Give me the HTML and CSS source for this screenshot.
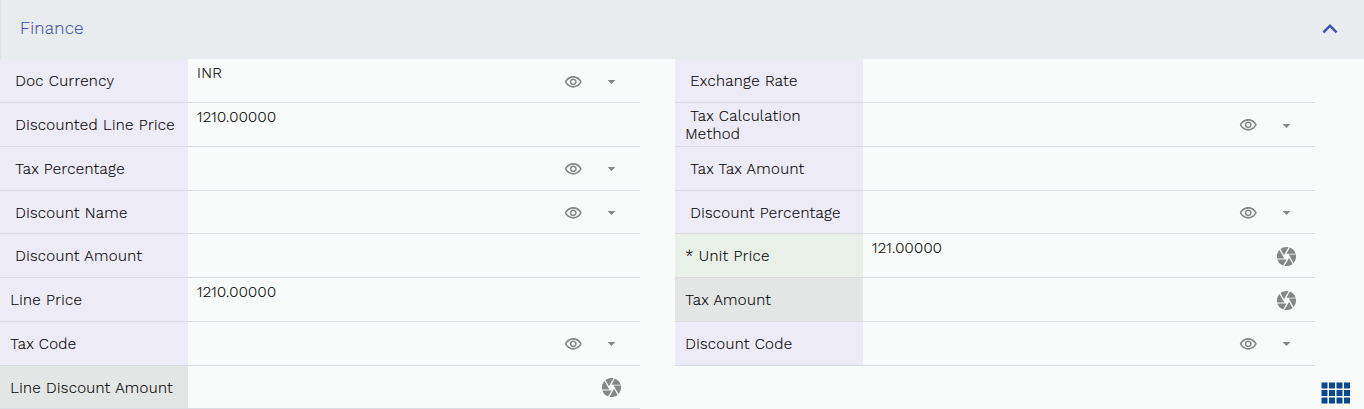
FILE: index.html
```html
<!DOCTYPE html>
<html lang="en">
<head>
<meta charset="utf-8">
<title>Finance</title>
<link rel="stylesheet" href="styles.css">
</head>
<body>
<svg class="defs" width="0" height="0">
<symbol id="eye" viewBox="0 0 24 24"><path d="M12 6c3.790 0 7.170 2.130 8.820 5.500C19.170 14.870 15.790 17 12 17s-7.170-2.130-8.820-5.500C4.830 8.130 8.210 6 12 6m0-2C7 4 2.730 7.110 1 11.500 2.730 15.890 7 19 12 19s9.270-3.110 11-7.500C21.270 7.110 17 4 12 4zm0 5c1.380 0 2.500 1.120 2.500 2.500S13.380 14 12 14s-2.500-1.120-2.500-2.500S10.620 9 12 9m0-2c-2.480 0-4.500 2.020-4.500 4.500S9.520 16 12 16s4.500-2.020 4.500-4.500S14.480 7 12 7z"/></symbol>
<symbol id="down" viewBox="0 0 24 24"><path d="M7 10l5 5 5-5z"/></symbol>
<symbol id="camera" viewBox="0 0 24 24"><path d="M9.400 10.500l4.770-8.260C13.470 2.090 12.750 2 12 2c-2.400 0-4.600.85-6.320 2.250l3.660 6.350.06-.1zM21.540 9c-.92-2.920-3.150-5.260-6-6.340L11.880 9h9.660zm.26 1h-7.490l.29.5 4.760 8.250C21 16.970 22 14.610 22 12c0-.69-.07-1.350-.2-2zM8.540 12l-3.900-6.750C3.010 7.030 2 9.390 2 12c0 .69.07 1.350.2 2h7.490l-1.150-2zm-6.080 3c.92 2.920 3.150 5.260 6 6.340L12.120 15H2.460zm11.270 0l-3.900 6.760c.7.15 1.420.24 2.170.24 2.400 0 4.600-.85 6.320-2.250l-3.660-6.350-.93 1.600z"/></symbol>
</svg>
<section class="panel">
<header class="panel-head"><h2>Finance</h2><svg class="collapse" viewBox="0 0 24 24"><path d="M12 8l-6 6 1.410 1.410L12 10.830l4.590 4.580L18 14z"/></svg></header>
<div class="columns">
<div class="column">
<div class="row"><label class="label indent">Doc Currency</label><div class="value">INR</div><svg class="eye"><use href="#eye"/></svg><svg class="down"><use href="#down"/></svg></div>
<div class="row"><label class="label indent">Discounted Line Price</label><div class="value">1210.00000</div></div>
<div class="row"><label class="label indent">Tax Percentage</label><div class="value"></div><svg class="eye"><use href="#eye"/></svg><svg class="down"><use href="#down"/></svg></div>
<div class="row"><label class="label indent">Discount Name</label><div class="value"></div><svg class="eye"><use href="#eye"/></svg><svg class="down"><use href="#down"/></svg></div>
<div class="row"><label class="label indent">Discount Amount</label><div class="value"></div></div>
<div class="row"><label class="label">Line Price</label><div class="value">1210.00000</div></div>
<div class="row"><label class="label">Tax Code</label><div class="value"></div><svg class="eye"><use href="#eye"/></svg><svg class="down"><use href="#down"/></svg></div>
<div class="row"><label class="label readonly">Line Discount Amount</label><div class="value"></div><svg class="camera"><use href="#camera"/></svg></div>
</div>
<div class="column">
<div class="row"><label class="label indent">Exchange Rate</label><div class="value"></div></div>
<div class="row"><label class="label indent">Tax Calculation<br>Method</label><div class="value"></div><svg class="eye"><use href="#eye"/></svg><svg class="down"><use href="#down"/></svg></div>
<div class="row"><label class="label indent">Tax Tax Amount</label><div class="value"></div></div>
<div class="row"><label class="label indent">Discount Percentage</label><div class="value"></div><svg class="eye"><use href="#eye"/></svg><svg class="down"><use href="#down"/></svg></div>
<div class="row"><label class="label required">* Unit Price</label><div class="value">121.00000</div><svg class="camera"><use href="#camera"/></svg></div>
<div class="row"><label class="label readonly">Tax Amount</label><div class="value"></div><svg class="camera"><use href="#camera"/></svg></div>
<div class="row"><label class="label">Discount Code</label><div class="value"></div><svg class="eye"><use href="#eye"/></svg><svg class="down"><use href="#down"/></svg></div>
</div>
</div>
</section>
<svg class="apps" viewBox="0 0 24 24"><path d="M3 9h4V5H3v4zm0 5h4v-4H3v4zm5 0h4v-4H8v4zm5 0h4v-4h-4v4zM8 9h4V5H8v4zm5-4v4h4V5h-4zm5 9h4v-4h-4v4zM3 19h4v-4H3v4zm5 0h4v-4H8v4zm5 0h4v-4h-4v4zm5 0h4v-4h-4v4zm0-14v4h4V5h-4z"/></svg>
</body>
</html>
```
FILE: styles.css
```css
* { box-sizing: border-box; }
body {
  margin: 0;
  height: 409px;
  overflow: hidden;
  background: #f9fbfa;
  color: #000;
  font-family: "Work Sans", Inter, "Noto Sans", sans-serif;
  -webkit-text-stroke: 0.15px currentColor;
}
.defs { position: absolute; }
.panel-head {
  display: flex;
  align-items: center;
  justify-content: space-between;
  height: 59.400px;
  padding: 0 19px 0 19px;
  border-left: 1px solid #dde0e4;
  background: #e9ecef;
}
.panel-head h2 {
  margin: 0 0 3px;
  color: #3f51b5;
  font-size: 17px;
  font-weight: 300;
  letter-spacing: 0.25px;
}
.collapse { width: 30px; height: 30px; margin-bottom: 2px; fill: #3f51b5; }
.columns { display: flex; gap: 35px; align-items: flex-start; }
.column { width: 640.400px; }
.column + .column { margin-left: -0.400px; }
.row {
  display: flex;
  align-items: center;
  height: 43.750px;
  border-bottom: 1px solid #d9dbe3;
}
.label {
  align-self: stretch;
  align-content: center;
  flex: 0 0 188px;
  padding: 1px 0 0 10.300px;
  background: #edebf5;
  font-size: 15px;
  font-weight: 300;
  line-height: 18px;
  letter-spacing: 0.35px;
  white-space: nowrap;
}
.indent { text-indent: 5px; }
.required { background: #e9f0e8; }
.readonly { background: #e4e6e5; }
.value {
  align-self: stretch;
  flex: 1;
  padding: 5px 0 0 9px;
  font-size: 15px;
  line-height: 18px;
  font-weight: 300;
  letter-spacing: 0.3px;
}
.row svg { fill: #858786; flex: none; }
.row .eye { width: 18.500px; height: 18.500px; margin: 2px 20px 0 0; }
.row .down { width: 19px; height: 19px; margin: 1px 19px 0 0; }
.row .camera { width: 23px; height: 23px; margin: 1px 17px 0 0; }
.apps {
  position: absolute;
  left: 1317px;
  top: 374.500px;
  width: 36px;
  height: 36px;
  fill: #08488f;
}
```
